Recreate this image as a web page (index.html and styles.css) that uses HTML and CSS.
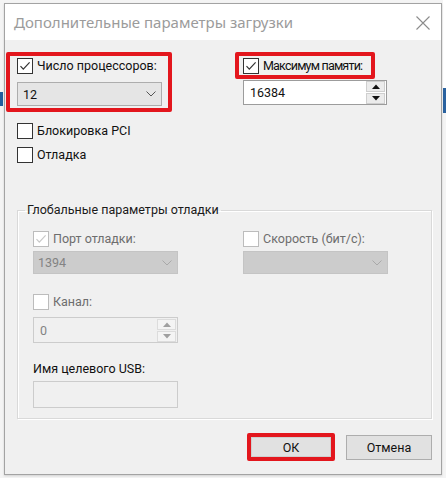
FILE: index.html
```html
<!DOCTYPE html>
<html lang="ru">
<head>
<meta charset="utf-8">
<title>Дополнительные параметры загрузки</title>
<link rel="stylesheet" href="styles.css">
</head>
<body>
<div class="screen">
  <div class="dialog">
    <div class="titlebar">
      <span class="title">Дополнительные параметры загрузки</span>
      <svg class="close" width="14" height="14" viewBox="0 0 14 14"><path d="M0.5 0.5L13.5 13.5M13.5 0.5L0.5 13.5" stroke="#8c8c8c" stroke-width="1.1" fill="none"/></svg>
    </div>
    <div class="content">
      <div class="top">
        <div class="redbox rb1">
          <div class="check">
            <span class="cb"><svg viewBox="0 0 14 14"><path d="M2.5 7.2L5.3 10.2L11.6 3.4" stroke="#333" stroke-width="1.2" fill="none"/></svg></span>
            <span class="lbl">Число процессоров:</span>
          </div>
          <div class="select">
            <span>12</span>
            <svg class="chev" width="10" height="6" viewBox="0 0 10 6"><path d="M0.5 0.5L5 5L9.5 0.5" stroke="#555" stroke-width="1" fill="none"/></svg>
          </div>
        </div>
        <div class="col-right">
          <div class="redbox rb2">
            <div class="check">
              <span class="cb"><svg viewBox="0 0 14 14"><path d="M2.5 7.2L5.3 10.2L11.6 3.4" stroke="#333" stroke-width="1.2" fill="none"/></svg></span>
              <span class="lbl tight">Максимум памяти:</span>
            </div>
          </div>
          <div class="spin">
            <span class="val">16384</span>
            <div class="spin-btns">
              <span class="sb"><svg width="8" height="5" viewBox="0 0 8 5"><path d="M0 5L4 0.5L8 5Z" fill="#111"/></svg></span>
              <span class="sb"><svg width="8" height="5" viewBox="0 0 8 5"><path d="M0 0L4 4.5L8 0Z" fill="#111"/></svg></span>
            </div>
          </div>
        </div>
      </div>

      <div class="check row pci">
        <span class="cb"></span>
        <span class="lbl">Блокировка PCI</span>
      </div>
      <div class="check row dbg">
        <span class="cb"></span>
        <span class="lbl">Отладка</span>
      </div>

      <fieldset class="group">
        <legend>Глобальные параметры отладки</legend>
        <div class="gpair">
          <div class="gcol">
            <div class="check dis">
              <span class="cb"><svg viewBox="0 0 14 14"><path d="M2.5 7.2L5.3 10.2L11.6 3.4" stroke="#c8c8c8" stroke-width="1.2" fill="none"/></svg></span>
              <span class="lbl">Порт отладки:</span>
            </div>
            <div class="select dsel">
              <span>1394</span>
              <svg class="chev" width="10" height="6" viewBox="0 0 10 6"><path d="M0.5 0.5L5 5L9.5 0.5" stroke="#a9a9a9" stroke-width="1" fill="none"/></svg>
            </div>
          </div>
          <div class="gcol">
            <div class="check dis">
              <span class="cb"></span>
              <span class="lbl">Скорость (бит/с):</span>
            </div>
            <div class="select dsel">
              <span></span>
              <svg class="chev" width="10" height="6" viewBox="0 0 10 6"><path d="M0.5 0.5L5 5L9.5 0.5" stroke="#a9a9a9" stroke-width="1" fill="none"/></svg>
            </div>
          </div>
        </div>
        <div class="check dis chan">
          <span class="cb"></span>
          <span class="lbl">Канал:</span>
        </div>
        <div class="spin dspin">
          <span class="val">0</span>
          <div class="spin-btns">
            <span class="sb"><svg width="8" height="5" viewBox="0 0 8 5"><path d="M0 5L4 0.5L8 5Z" fill="#a0a0a0"/></svg></span>
            <span class="sb"><svg width="8" height="5" viewBox="0 0 8 5"><path d="M0 0L4 4.5L8 0Z" fill="#a0a0a0"/></svg></span>
          </div>
        </div>
        <div class="usb-lbl">Имя целевого USB:</div>
        <div class="usb-input"></div>
      </fieldset>

      <div class="buttons">
        <div class="okwrap"><button class="btn ok">ОК</button></div>
        <button class="btn cancel">Отмена</button>
      </div>
    </div>
  </div>
</div>
</body>
</html>
```

FILE: styles.css
```css
html, body {
  margin: 0;
  padding: 0;
}

body {
  width: 446px;
  height: 478px;
  overflow: hidden;
  font-family: Roboto, "Noto Sans", sans-serif;
  font-size: 12.5px;
  color: #111;
}

.screen {
  width: 446px;
  height: 478px;
  box-sizing: border-box;
  padding: 3px 0 0 4px;
  background:
    linear-gradient(#1f5e9e, #1f5e9e) 0 92px / 3px 14px no-repeat,
    linear-gradient(#2a629f, #2a629f) 443px 88px / 3px 25px no-repeat,
    linear-gradient(#ffffff, #ffffff) 443px 0 / 3px 88px no-repeat,
    #f4f4f4;
}

.dialog {
  width: 438px;
  height: 472px;
  box-sizing: border-box;
  border: 1px solid #a3a3a3;
  background: #f0f0f0;
  display: flex;
  flex-direction: column;
  box-shadow: 0 1px 2px rgba(0, 0, 0, 0.15);
}

.titlebar {
  height: 36px;
  flex: none;
  background: #fff;
  display: flex;
  align-items: center;
  justify-content: space-between;
  padding: 0 11px 0 9px;
}

.title {
  font-family: "Noto Sans", sans-serif;
  font-size: 15px;
  color: #9b9b9b;
}

.close {
  display: block;
  margin-top: 1px;
}

.content {
  flex: 1;
  display: flex;
  flex-direction: column;
}

.top {
  display: flex;
  margin-top: 12px;
}

.redbox {
  box-sizing: border-box;
  border: 4px solid #e3161d;
  border-radius: 2px;
}

.rb1 {
  margin-left: 1px;
  width: 166px;
  height: 60px;
  padding: 2px 6px 2px 7px;
  display: flex;
  flex-direction: column;
  gap: 8px;
}

.col-right {
  margin-left: 63px;
  display: flex;
  flex-direction: column;
}

.rb2 {
  width: 140px;
  height: 27px;
  padding: 2px 0 0 4px;
}

.check {
  display: flex;
  align-items: center;
  gap: 4px;
  height: 16px;
  white-space: nowrap;
}

.cb {
  width: 16px;
  height: 16px;
  flex: none;
  box-sizing: border-box;
  border: 1px solid #333;
  background: #fff;
  display: flex;
}

.cb svg {
  width: 14px;
  height: 14px;
}

.lbl {
  line-height: 16px;
}

.tight {
  letter-spacing: -0.8px;
}

.select {
  width: 145px;
  height: 24px;
  box-sizing: border-box;
  border: 1px solid #adadad;
  background: #e5e5e5;
  display: flex;
  align-items: center;
  justify-content: space-between;
  padding: 0 5px 0 5px;
}

.chev {
  display: block;
}

.spin {
  margin: 1px 0 0 8px;
  width: 144px;
  height: 25px;
  box-sizing: border-box;
  border: 1px solid #9c9c9c;
  background: #fff;
  display: flex;
  align-items: center;
  justify-content: space-between;
  padding: 0 1px 0 6px;
}

.spin-btns {
  width: 19px;
  height: 23px;
  display: flex;
  flex-direction: column;
  gap: 1px;
}

.sb {
  flex: 1;
  box-sizing: border-box;
  border: 1px solid #cfcfcf;
  background: #ececec;
  display: flex;
  align-items: center;
  justify-content: center;
}

.sb svg {
  display: block;
}

.row {
  margin-left: 12px;
}

.pci {
  margin-top: 11px;
}

.dbg {
  margin-top: 8px;
}

.group {
  margin: 38px 0 0 12px;
  width: 415px;
  box-sizing: border-box;
  border: 1px solid #d9d9d9;
  box-shadow: inset 1px 1px 0 #fff, 1px 1px 0 #fff;
  padding: 12px 0 10px 15px;
  min-width: 0;
}

.group legend {
  margin-left: -8px;
  padding: 0 2px;
  line-height: 18px;
  color: #1a1a1a;
}

.gpair {
  display: flex;
  gap: 65px;
}

.gcol {
  display: flex;
  flex-direction: column;
  gap: 4px;
}

.dis .cb {
  border-color: #bcbcbc;
}

.dis .lbl {
  color: #6d6d6d;
}

.dsel {
  height: 23px;
  background: #cccccc;
  border-color: #c4c4c4;
  color: #838383;
  padding-left: 4px;
}

.chan {
  margin-top: 20px;
}

.dspin {
  margin: 7px 0 0 0;
  width: 145px;
  height: 26px;
  background: #f0f0f0;
  border-color: #cccccc;
  color: #838383;
}

.dspin .sb {
  background: #f4f4f4;
  border-color: #dcdcdc;
}

.usb-lbl {
  margin-top: 18px;
  line-height: 16px;
  color: #111;
}

.usb-input {
  margin-top: 4px;
  width: 145px;
  height: 27px;
  box-sizing: border-box;
  border: 1px solid #cccccc;
  background: #f0f0f0;
}

.buttons {
  display: flex;
  justify-content: flex-end;
  align-items: center;
  gap: 11px;
  margin-top: 14px;
  padding-right: 9px;
}

.okwrap {
  width: 88px;
  height: 28px;
  box-sizing: border-box;
  border: 4px solid #e3161d;
  border-radius: 2px;
  display: flex;
}

.btn {
  font-family: inherit;
  font-size: 12.5px;
  color: #111;
  background: #e1e1e1;
  margin: 0;
  padding: 0;
}

.ok {
  flex: 1;
  border: 1px solid #cfcfcf;
}

.cancel {
  width: 86px;
  height: 25px;
  border: 1px solid #adadad;
}
```
